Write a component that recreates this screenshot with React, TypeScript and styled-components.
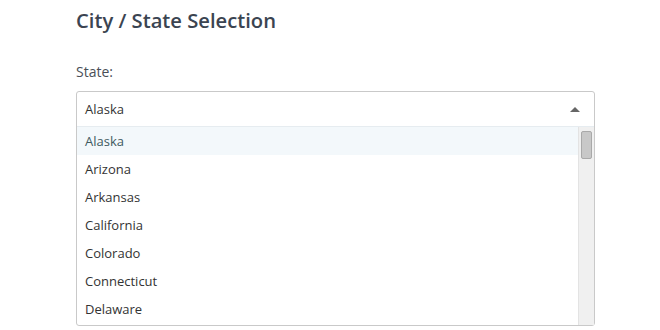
import React from 'react';
import styled, { createGlobalStyle } from 'styled-components';

const GlobalStyle = createGlobalStyle`
  body {
    margin: 0;
    background: #ffffff;
    font-family: 'Open Sans', 'Noto Sans', sans-serif;
  }
`;

const states = [
  'Alaska',
  'Arizona',
  'Arkansas',
  'California',
  'Colorado',
  'Connecticut',
  'Delaware',
];

//전체 화면
const Page = styled.section`
  width: 519px;
  padding: 6px 0 0 76px;
`;

const Title = styled.h2`
  margin: 0;
  font-size: 20.2px;
  line-height: 28px;
  font-weight: 600;
  color: #3b4451;
`;

const Label = styled.label`
  display: block;
  margin-top: 28px;
  font-size: 14px;
  line-height: 20px;
  color: #4a4f57;
`;

const SelectWrap = styled.div`
  margin-top: 9px;
  border: 1px solid #c9c9c9;
  border-radius: 3px;
  background: #fff;
`;

const SelectHead = styled.div`
  display: flex;
  align-items: center;
  justify-content: space-between;
  height: 34px;
  padding: 0 14px 0 8px;
  font-size: 13px;
  color: #333;
  border-bottom: 1px solid #e6ecf0;
`;

const Caret = styled.span`
  width: 0;
  height: 0;
  border-left: 5px solid transparent;
  border-right: 5px solid transparent;
  border-bottom: 5px solid #666;
`;

const ListArea = styled.div`
  display: flex;
  height: 198px;
  overflow: hidden;
`;

const List = styled.ul`
  flex: 1;
  margin: 0;
  padding: 0;
  list-style: none;
`;

const Option = styled.li<{ $active?: boolean }>`
  height: 28px;
  line-height: 28px;
  padding-left: 8px;
  font-size: 13px;
  color: ${(p) => (p.$active ? '#3f5a5f' : '#333')};
  background: ${(p) => (p.$active ? '#f3f8fb' : '#fff')};
`;

const ScrollTrack = styled.div`
  width: 16px;
  background: #f0f0f0;
  border-left: 1px solid #e3e3e3;
  padding: 4px 2px 0 2px;
  box-sizing: border-box;
`;

const ScrollThumb = styled.div`
  height: 26px;
  background: #c8c8c8;
  border: 1px solid #a9a9a9;
  border-radius: 2px;
`;

const App = () => {
  return (
    <Page>
      <GlobalStyle />
      <Title>City / State Selection</Title>
      <Label>State:</Label>
      <SelectWrap>
        <SelectHead>
          <span>Alaska</span>
          <Caret />
        </SelectHead>
        <ListArea>
          <List>
            {states.map((s, i) => (
              <Option key={s} $active={i === 0}>
                {s}
              </Option>
            ))}
          </List>
          <ScrollTrack>
            <ScrollThumb />
          </ScrollTrack>
        </ListArea>
      </SelectWrap>
    </Page>
  );
};
export default App;
